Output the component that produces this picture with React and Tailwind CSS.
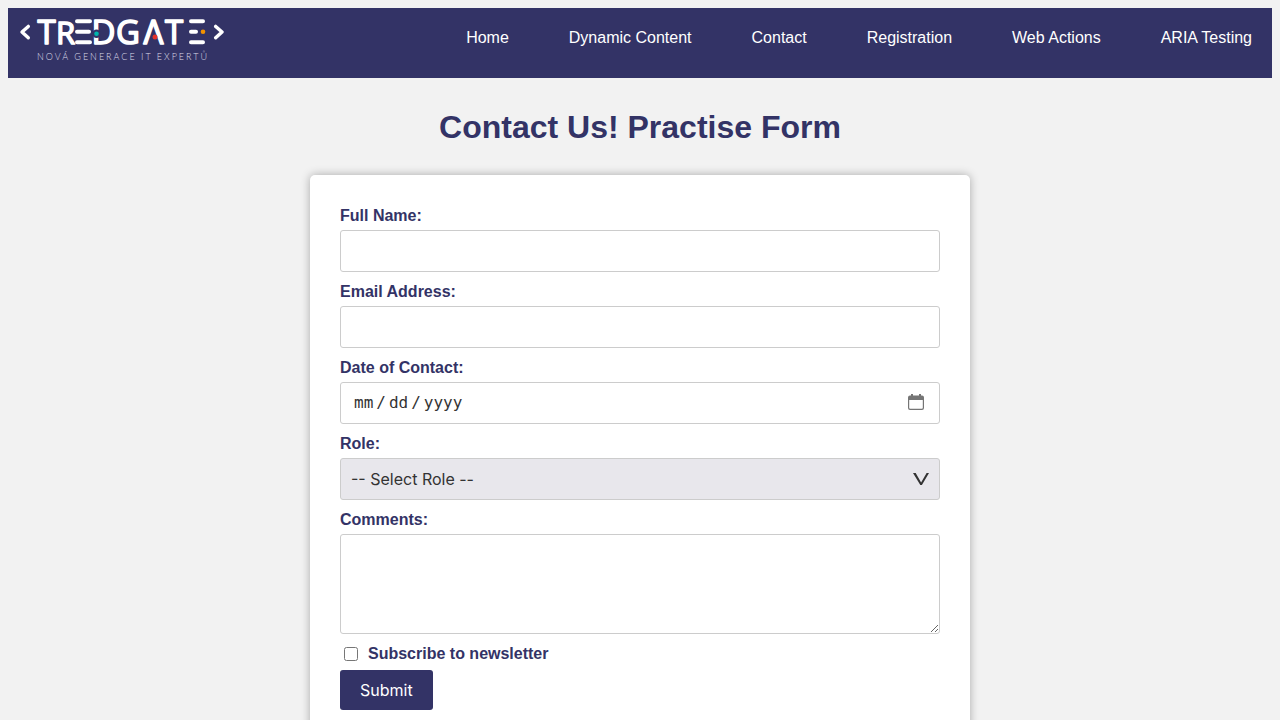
const NAV_ITEMS = [
  'Home',
  'Dynamic Content',
  'Contact',
  'Registration',
  'Web Actions',
  'ARIA Testing',
];

const fieldClass =
  'block w-full h-[42px] rounded-[3px] border border-[#ccc] bg-white px-2.5 text-base text-[#333]';

function Logo() {
  return (
    <a href="#home" aria-label="Tredgate" className="block shrink-0">
      <svg width="216" height="60" viewBox="0 0 216 60" fill="none">
        <g stroke="#fff" strokeWidth="3.4" strokeLinecap="round" strokeLinejoin="round">
          <path d="M20.3 18.4 L14 24 L20.3 29.8" />
          <path d="M207.7 18.4 L214 24 L207.7 29.8" />
        </g>
        <g stroke="#fff" strokeWidth="4" strokeLinecap="round">
          <path d="M69 13.3H82M69 23.8H81M69 34.3H82" />
          <path d="M183 13.3H195M183 23.8H188M183 34.3H195" />
        </g>
        <g
          fill="#fff"
          stroke="#fff"
          strokeWidth="1.5"
          strokeLinejoin="round"
          fontFamily="'Open Sans', sans-serif"
          fontSize="33"
        >
          <text x="29.5" y="35.7">T</text>
          <text x="48" y="35.7" fontSize="31">R</text>
          <text x="83.5" y="35.7">D</text>
          <text x="108" y="35.7">G</text>
          <text x="135.5" y="35.7">Λ</text>
          <text x="157" y="35.7">T</text>
        </g>
        <circle cx="88.5" cy="25.7" r="4.2" fill="#333366" />
        <circle cx="88.5" cy="25.7" r="2.3" fill="#00b5ad" />
        <circle cx="147" cy="29" r="2.5" fill="#e6332a" />
        <circle cx="195" cy="23.7" r="2.3" fill="#f39200" />
        <text
          x="29"
          y="51.5"
          fill="#dddce8"
          className="font-['Lato',sans-serif] text-[9px] font-light tracking-[2px]"
        >
          NOVÁ GENERACE IT EXPERTŮ
        </text>
      </svg>
    </a>
  );
}

function Field({ id, label, children }) {
  return (
    <div>
      <label htmlFor={id} className="mb-[3px] block text-base leading-[22px] font-bold">
        {label}
      </label>
      {children}
    </div>
  );
}

export default function App() {
  return (
    <div className="min-h-screen bg-[#f2f2f2] p-2 font-['Liberation_Sans',Arial,sans-serif] text-[#333366]">
      <header className="flex h-[70px] items-start justify-between bg-[#333366] pr-5">
        <Logo />
        <nav>
          <ul className="flex gap-[60px] pt-5">
            {NAV_ITEMS.map((item) => (
              <li key={item}>
                <a href="#" className="block text-base leading-5 whitespace-nowrap text-white">
                  {item}
                </a>
              </li>
            ))}
          </ul>
        </nav>
      </header>

      <main className="flex flex-col items-center">
        <h1 className="mt-[31px] mb-[30px] text-[32px] leading-9 font-bold">
          Contact Us! Practise Form
        </h1>

        <form className="flex w-full max-w-[660px] flex-col gap-[9px] rounded-[5px] bg-white p-[30px] shadow-[0_0_10px_rgba(0,0,0,0.3)]">
          <Field id="name" label="Full Name:">
            <input id="name" type="text" className={fieldClass} />
          </Field>
          <Field id="email" label="Email Address:">
            <input id="email" type="email" className={fieldClass} />
          </Field>
          <Field id="date" label="Date of Contact:">
            <div className="relative">
              <input
                id="date"
                type="date"
                className={`${fieldClass} font-['DejaVu_Sans_Mono',monospace] [&::-webkit-calendar-picker-indicator]:opacity-0 [&::-webkit-datetime-edit-day-field]:px-[3px] [&::-webkit-datetime-edit-month-field]:px-[3px] [&::-webkit-datetime-edit-year-field]:px-[3px]`}
              />
              <svg
                className="pointer-events-none absolute top-3 right-4"
                width="16"
                height="16"
                viewBox="0 0 16 16"
              >
                <path
                  fill="#757575"
                  fillRule="evenodd"
                  d="M3 0H5V1.5H11V0H13V1.5H14A2 2 0 0 1 16 3.5V14A2 2 0 0 1 14 16H2A2 2 0 0 1 0 14V3.5A2 2 0 0 1 2 1.5H3ZM1.2 6V13.8A1 1 0 0 0 2.2 14.8H13.8A1 1 0 0 0 14.8 13.8V6Z"
                />
              </svg>
            </div>
          </Field>
          <Field id="role" label="Role:">
            <div className="relative">
              <select
                id="role"
                className="block h-[42px] w-full appearance-none rounded-[3px] border border-[#ccc] bg-[#e8e7ec] px-2.5 font-['Inter',sans-serif] text-base text-[#333]"
              >
                <option>-- Select Role --</option>
              </select>
              <svg
                className="pointer-events-none absolute top-[15px] right-2.5"
                width="17"
                height="13"
                viewBox="0 0 17 13"
              >
                <path fill="#333" d="M0 0H2.7L8.1 9.6L13.6 0H16L8.9 12H7.3Z" />
              </svg>
            </div>
          </Field>
          <Field id="comments" label="Comments:">
            <textarea
              id="comments"
              className="block h-[100px] w-full resize rounded-[3px] border border-[#ccc] bg-white p-2.5 text-base text-[#333]"
            />
          </Field>
          <div className="flex flex-col items-start gap-[5px]">
            <div className="flex h-[22px] items-center gap-2.5 pl-1">
              <input id="newsletter" type="checkbox" className="size-3.5" />
              <label htmlFor="newsletter" className="text-base font-bold">
                Subscribe to newsletter
              </label>
            </div>
            <button
              type="submit"
              className="h-10 rounded-[3px] bg-[#333366] px-5 font-['Inter',sans-serif] text-base text-white"
            >
              Submit
            </button>
          </div>
        </form>
      </main>
    </div>
  );
}
